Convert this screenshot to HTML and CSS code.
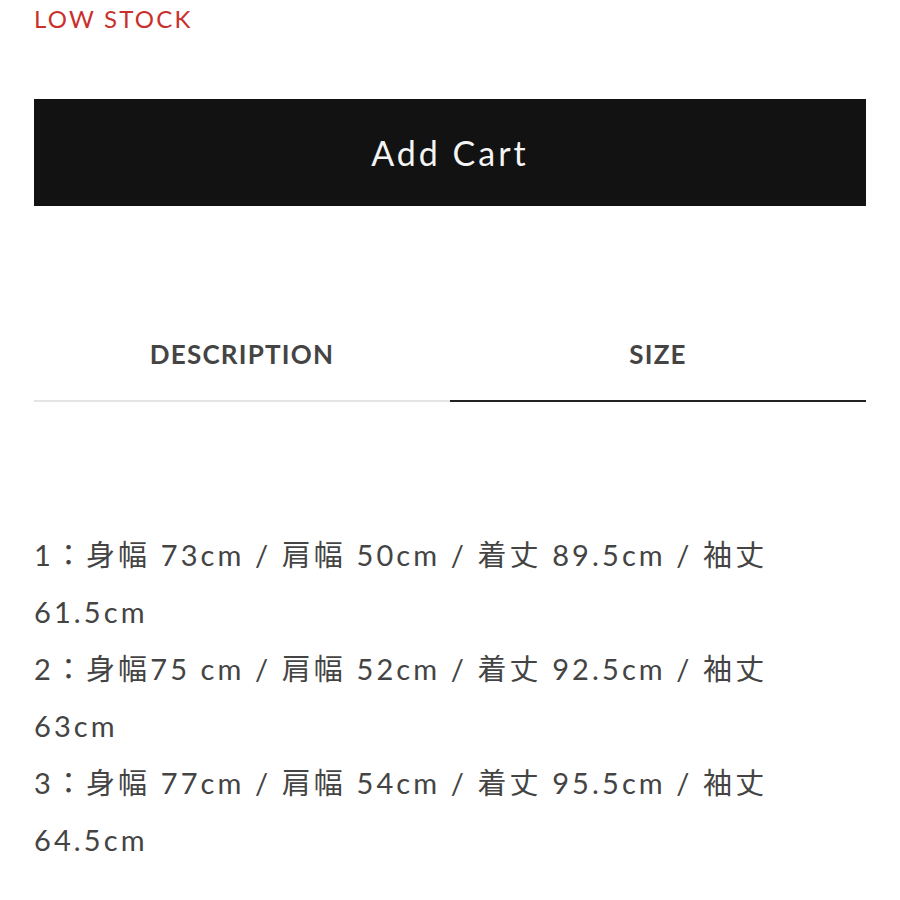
FILE: index.html
```html
<!DOCTYPE html>
<html>
<head>
  <title>Product</title>
  <link rel="stylesheet" href="styles.css">
</head>
<body>
<div class="container">
  <p class="stock">LOW STOCK</p>

  <button class="add-cart" type="button">Add Cart</button>

  <div class="tabs">
    <div class="tab">DESCRIPTION</div>
    <div class="tab active">SIZE</div>
  </div>

  <div class="size-info">
    <p>1：身幅 73cm / 肩幅 50cm / 着丈 89.5cm / 袖丈 61.5cm</p>
    <p>2：身幅75 cm / 肩幅 52cm / 着丈 92.5cm / 袖丈 63cm</p>
    <p>3：身幅 77cm / 肩幅 54cm / 着丈 95.5cm / 袖丈 64.5cm</p>
  </div>
</div>
</body>
</html>
```

FILE: styles.css
```css
/* product panel */
body {
  margin: 0;
  font-family: Lato, "Noto Sans CJK JP", sans-serif;
  background: #fff;
}

.container {
  padding: 0 34px;
}

.stock {
  margin: 0;
  padding-top: 5px;
  height: 94px;
  font-size: 24px;
  line-height: 28px;
  letter-spacing: 2.2px;
  color: #c9302c;
}

.add-cart {
  display: block;
  width: 100%;
  height: 107px;
  border: none;
  background-color: #121212;
  color: #f4f4f4;
  font-family: Lato, sans-serif;
  font-size: 34px;
  letter-spacing: 3px;
  cursor: pointer;
}

.tabs {
  display: flex;
  margin-top: 134px;
}

.tab {
  flex: 1;
  text-align: center;
  font-size: 26px;
  font-weight: 700;
  letter-spacing: 1.2px;
  color: #444;
  padding-bottom: 32px;
  line-height: 28px;
  border-bottom: 2px solid #e4e4e4;
}

.tab.active {
  border-bottom-color: #222;
}

.size-info {
  max-width: 790px;
  margin-top: 124px;
  font-size: 29px;
  line-height: 57px;
  letter-spacing: 3.1px;
  color: #444;
}

.size-info p {
  margin: 0;
}
```
